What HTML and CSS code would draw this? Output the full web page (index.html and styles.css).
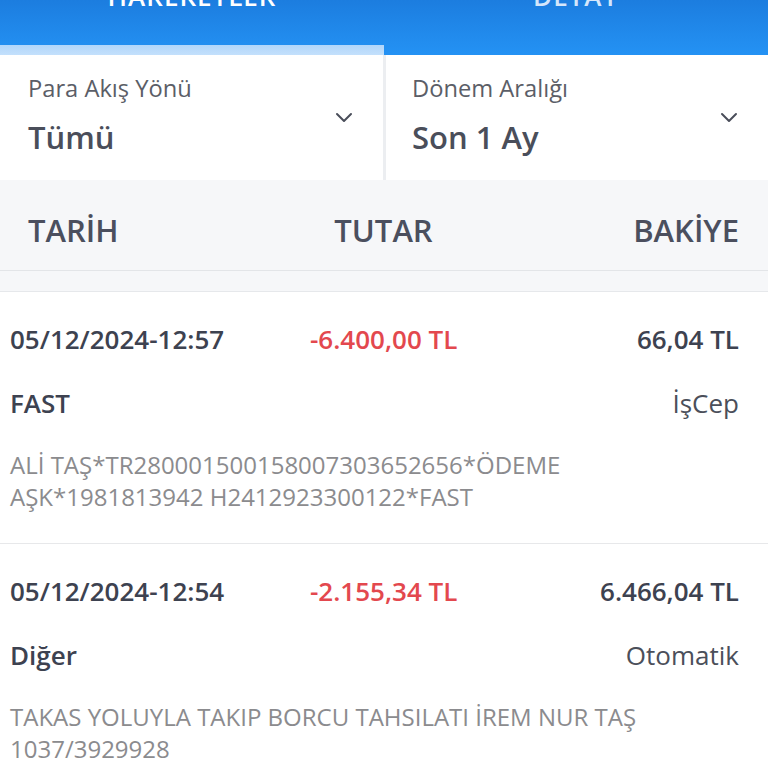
FILE: index.html
```html
<!DOCTYPE html>
<html>
<head>
  <meta charset="utf-8">
  <title>Hesap Hareketleri</title>
  <link rel="stylesheet" href="styles.css">
</head>
<body>
  <div id="tabs">
    <div class="tab active">
      <div class="tab-label">HAREKETLER</div>
      <div class="tab-bar"></div>
    </div>
    <div class="tab">
      <div class="tab-label">DETAY</div>
      <div class="tab-bar"></div>
    </div>
  </div>

  <div id="filters">
    <div class="filter">
      <div class="filter-text">
        <div class="filter-label">Para Akış Yönü</div>
        <div class="filter-value">Tümü</div>
      </div>
      <svg class="chevron" width="18" height="11" viewBox="0 0 18 11">
        <path d="M2 2 L9 9 L16 2" fill="none" stroke="#4a4e5a" stroke-width="2" stroke-linecap="round" stroke-linejoin="round"/>
      </svg>
    </div>
    <div class="filter">
      <div class="filter-text">
        <div class="filter-label">Dönem Aralığı</div>
        <div class="filter-value">Son 1 Ay</div>
      </div>
      <svg class="chevron" width="18" height="11" viewBox="0 0 18 11">
        <path d="M2 2 L9 9 L16 2" fill="none" stroke="#4a4e5a" stroke-width="2" stroke-linecap="round" stroke-linejoin="round"/>
      </svg>
    </div>
  </div>

  <div id="colhead">
    <div>TARİH</div>
    <div class="mid">TUTAR</div>
    <div class="end">BAKİYE</div>
  </div>
  <div id="spacer"></div>

  <div id="list">
    <div class="item">
      <div class="line">
        <div class="date">05/12/2024-12:57</div>
        <div class="amount">-6.400,00 TL</div>
        <div class="balance">66,04 TL</div>
      </div>
      <div class="line type">
        <div class="kind">FAST</div>
        <div class="channel">İşCep</div>
      </div>
      <div class="desc">ALİ TAŞ*TR280001500158007303652656*ÖDEME<br>AŞK*1981813942 H2412923300122*FAST</div>
    </div>
    <div class="item">
      <div class="line">
        <div class="date">05/12/2024-12:54</div>
        <div class="amount">-2.155,34 TL</div>
        <div class="balance">6.466,04 TL</div>
      </div>
      <div class="line type">
        <div class="kind">Diğer</div>
        <div class="channel">Otomatik</div>
      </div>
      <div class="desc">TAKAS YOLUYLA TAKIP BORCU TAHSILATI İREM NUR TAŞ<br>1037/3929928</div>
    </div>
  </div>
</body>
</html>
```

FILE: styles.css
```css
body {
  margin: 0;
  font-family: 'Open Sans', 'Noto Sans', sans-serif;
  background: #f6f7f9;
  overflow: hidden;
}
#tabs {
  display: flex;
  height: 55px;
  background: linear-gradient(#1c7ddf, #2492f4);
  overflow: hidden;
}
.tab {
  flex: 1;
  display: flex;
  flex-direction: column;
  justify-content: space-between;
  text-align: center;
}
.tab-label {
  margin-top: -19px;
  font-size: 26px;
  line-height: 30px;
  font-weight: 600;
  letter-spacing: 1px;
  color: #d4e6fb;
}
.tab.active .tab-label {
  color: #fff;
}
.tab-bar {
  height: 10px;
}
.tab.active .tab-bar {
  background: linear-gradient(#b2d6fa, #c3e0fc);
}
#filters {
  display: grid;
  grid-template-columns: 383px 1fr;
  gap: 3px;
  background: #eceef1;
}
.filter {
  display: flex;
  align-items: center;
  justify-content: space-between;
  height: 125px;
  padding: 0 30px 0 28px;
  background: #fff;
}
.filter:last-child {
  padding-left: 26px;
}
.filter-label {
  font-size: 23.7px;
  line-height: 30px;
  color: #5b5e67;
  margin-top: -8px;
}
.filter-value {
  margin-top: 16px;
  font-size: 31px;
  line-height: 36px;
  font-weight: 600;
  color: #4a4e5a;
}
.chevron {
  margin-top: 0;
}
#colhead {
  display: grid;
  grid-template-columns: 1fr 1fr 1fr;
  align-items: center;
  height: 90px;
  padding: 0 29px 0 28px;
  font-size: 31px;
  font-weight: 600;
  color: #4b4f5e;
  border-bottom: 1px solid #e3e5e8;
}
#colhead div {
  padding-top: 10px;
}
#colhead .mid {
  text-align: center;
}
#colhead .end {
  text-align: right;
}
#spacer {
  height: 20px;
  border-bottom: 1px solid #e6e8eb;
}
#list {
  background: #fff;
}
.item {
  padding: 31px 29px 30px 10px;
  border-bottom: 1px solid #e7e8ea;
}
.line {
  display: grid;
  grid-template-columns: 300px 1fr auto;
  font-size: 26px;
  line-height: 32px;
  font-weight: 600;
  color: #3d4250;
}
.amount {
  color: #e3484e;
}
.balance {
  text-align: right;
}
.type {
  grid-template-columns: 1fr auto;
  margin-top: 32px;
}
.channel {
  font-weight: 400;
  color: #4b4f5a;
}
.desc {
  margin-top: 30px;
  font-size: 24px;
  line-height: 32px;
  color: #8b8b8e;
}
```
